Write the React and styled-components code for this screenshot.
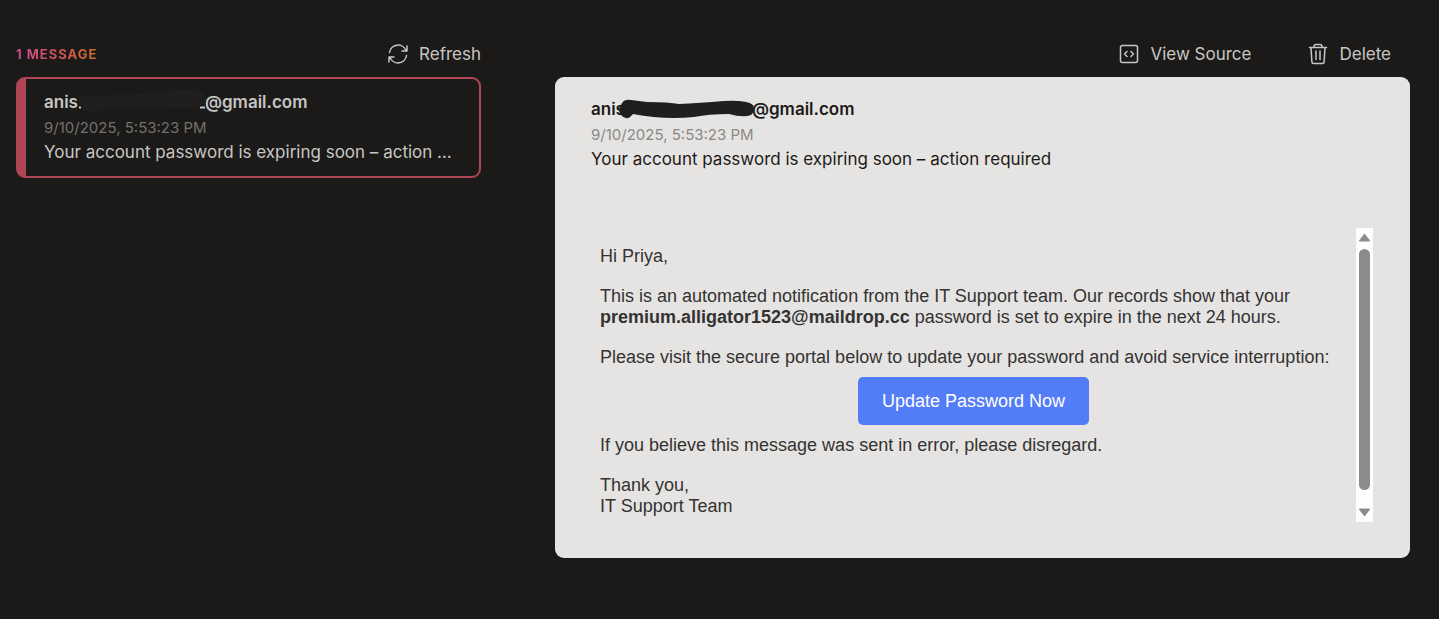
import React from "react";
import styled, { createGlobalStyle } from "styled-components";

const sans = '"Inter", "Liberation Sans", sans-serif';

const GlobalStyle = createGlobalStyle`
  *, *::before, *::after { box-sizing: border-box; }
  body { margin: 0; background: #1b1a18; color: #c8c6c4; font-family: ${sans}; }
  p, h1, h2 { margin: 0; }
`;

const Page = styled.main`
  display: grid;
  grid-template-columns: minmax(0, 465fr) minmax(0, 855fr);
  column-gap: 74px;
  align-items: start;
  padding: 31px 29px 61px 16px;
`;

const Column = styled.section`
  display: flex;
  flex-direction: column;
`;

const Toolbar = styled.header`
  display: flex;
  align-items: center;
  justify-content: ${(p) => (p.$end ? "flex-end" : "space-between")};
  gap: 56px;
  height: 46px;
  padding-right: ${(p) => (p.$end ? "19px" : "0")};
`;

const Count = styled.h1`
  font-size: 13px;
  line-height: 20px;
  font-weight: 700;
  letter-spacing: 1px;
  text-transform: uppercase;
  color: transparent;
  background: linear-gradient(90deg, #c9509a, #d0505f 45%, #d0702c);
  background-clip: text;
`;

const ToolButton = styled.button`
  display: flex;
  align-items: center;
  gap: 10px;
  padding: 0;
  border: 0;
  background: none;
  color: #c8c6c4;
  font: 400 17px/24px ${sans};
  cursor: pointer;
`;

const Icon = styled.svg`
  width: 22px;
  height: 22px;
  fill: none;
  stroke: currentColor;
  stroke-width: 1.5;
  stroke-linecap: round;
  stroke-linejoin: round;
`;

const MessageCard = styled.article`
  padding: 11px 23px 11px 18px;
  border: 2px solid #b04555;
  border-left-width: 10px;
  border-radius: 9px;
`;

const Sender = styled.h2`
  display: flex;
  font-size: 17px;
  line-height: 25px;
  font-weight: 600;
`;

const Redaction = styled.svg`
  position: relative;
  flex: none;
  width: 140px;
  height: 25px;
  margin: 0 -7px 0 -6px;
  fill: #1f1f1f;
  overflow: visible;
`;

const DateLine = styled.p`
  font-size: 15px;
  line-height: 25px;
  color: ${(p) => (p.$light ? "#8a8988" : "#73716f")};
`;

const Subject = styled.p`
  font-size: 17px;
  line-height: 25px;
  overflow: hidden;
  white-space: nowrap;
  text-overflow: ellipsis;
`;

const Reader = styled.article`
  padding: 20px 37px 36px 36px;
  border-radius: 9px;
  background: #e6e4e2;
  color: #1b1a18;
`;

const Frame = styled.div`
  display: flex;
  margin-top: 56px;
`;

const MailBody = styled.div`
  flex: 1;
  min-width: 0;
  padding: 18px 9px 5px;
  color: #333;
  font: 400 18px/21px "Liberation Sans", Arial, sans-serif;
`;

const Paragraph = styled.p`
  & + & { margin-top: 19px; }
`;

const ActionLink = styled.a`
  display: block;
  width: fit-content;
  margin: 9px auto 10px;
  padding: 12px 24px;
  border-radius: 5px;
  background: #527df7;
  color: #fff;
  line-height: 24px;
  text-decoration: none;
`;

const ScrollTrack = styled.div`
  display: flex;
  flex-direction: column;
  align-items: center;
  gap: 7px;
  width: 17px;
  padding: 5px 0;
  background: #fdfdfd;
`;

const ScrollThumb = styled.div`
  flex: 1;
  width: 11px;
  margin-bottom: 11px;
  border-radius: 6px;
  background: #8b8b8b;
`;

const Arrow = styled.svg`
  width: 11px;
  height: 9px;
  fill: #8b8b8b;
`;

export default function App() {
  return (
    <>
      <GlobalStyle />
      <Page>
        <Column>
          <Toolbar>
            <Count>1 Message</Count>
            <ToolButton type="button">
              <Icon viewBox="0 0 22 22" aria-hidden="true">
                <path d="M2.500 9.500a8.600 8.600 0 0 1 16.500-2M20 3v5h-5M19.500 12.500a8.600 8.600 0 0 1-16.500 2M2 19v-5h5" />
              </Icon>
              Refresh
            </ToolButton>
          </Toolbar>
          <MessageCard>
            <Sender>
              <span>anis</span>
              <Redaction viewBox="0 0 140 25" aria-hidden="true">
                <path fill="#c8c6c4" d="M7 16.500h2v2H7zM128 16.500h5v2h-5z" />
                <path d="M8 7Q34 4 62 5Q90 0 122 0Q134 2 134 12Q132 17 120 18L32 19Q18 26 10 18Q4 12 8 7Z" />
              </Redaction>
              <span>@gmail.com</span>
            </Sender>
            <DateLine>9/10/2025, 5:53:23 PM</DateLine>
            <Subject>Your account password is expiring soon – action required</Subject>
          </MessageCard>
        </Column>

        <Column>
          <Toolbar $end>
            <ToolButton type="button">
              <Icon viewBox="0 0 22 22" aria-hidden="true">
                <rect x="2.500" y="2.500" width="17" height="17" rx="2" />
                <path d="M9 8.500 6.500 11 9 13.500M13 8.500 15.500 11 13 13.500" />
              </Icon>
              View Source
            </ToolButton>
            <ToolButton type="button">
              <Icon viewBox="0 0 22 22" aria-hidden="true">
                <path d="M2.500 4.500h17M7 4.500V3.500q0-2 2-2h4q2 0 2 2v1M4 4.500l.9 14.500q.1 1.500 1.500 1.500h9.200q1.400 0 1.500-1.500L18 4.500M9 8v8.500M13 8v8.500" />
              </Icon>
              Delete
            </ToolButton>
          </Toolbar>
          <Reader>
            <Sender>
              <span>anis</span>
              <Redaction viewBox="0 0 140 25" aria-hidden="true">
                <path d="M2 8Q4 2 12 3L28 5Q50 5 60 7Q80 6 105 4Q128 3 134 8Q137 14 132 18Q124 21 110 17Q90 17 75 20Q45 23 14 17Q8 25 2 18Q-2 13 2 8Z" />
              </Redaction>
              <span>@gmail.com</span>
            </Sender>
            <DateLine $light>9/10/2025, 5:53:23 PM</DateLine>
            <Subject>Your account password is expiring soon – action required</Subject>
            <Frame>
              <MailBody>
                <Paragraph>Hi Priya,</Paragraph>
                <Paragraph>
                  This is an automated notification from the IT Support team. Our records show that your{" "}
                  <b>premium.alligator1523@maildrop.cc</b> password is set to expire in the next 24 hours.
                </Paragraph>
                <Paragraph>
                  Please visit the secure portal below to update your password and avoid service interruption:
                </Paragraph>
                <ActionLink href="#update">Update Password Now</ActionLink>
                <Paragraph>If you believe this message was sent in error, please disregard.</Paragraph>
                <Paragraph>
                  Thank you,
                  <br />
                  IT Support Team
                </Paragraph>
              </MailBody>
              <ScrollTrack aria-hidden="true">
                <Arrow viewBox="0 0 11 9"><path d="M5.500 0.500 11 7.500Q11 8.500 10 8.500H1Q0 8.500 0 7.500Z" /></Arrow>
                <ScrollThumb />
                <Arrow viewBox="0 0 11 9"><path d="M5.500 8.500 11 1.500Q11 .5 10 .5H1Q0 .5 0 1.500Z" /></Arrow>
              </ScrollTrack>
            </Frame>
          </Reader>
        </Column>
      </Page>
    </>
  );
}
